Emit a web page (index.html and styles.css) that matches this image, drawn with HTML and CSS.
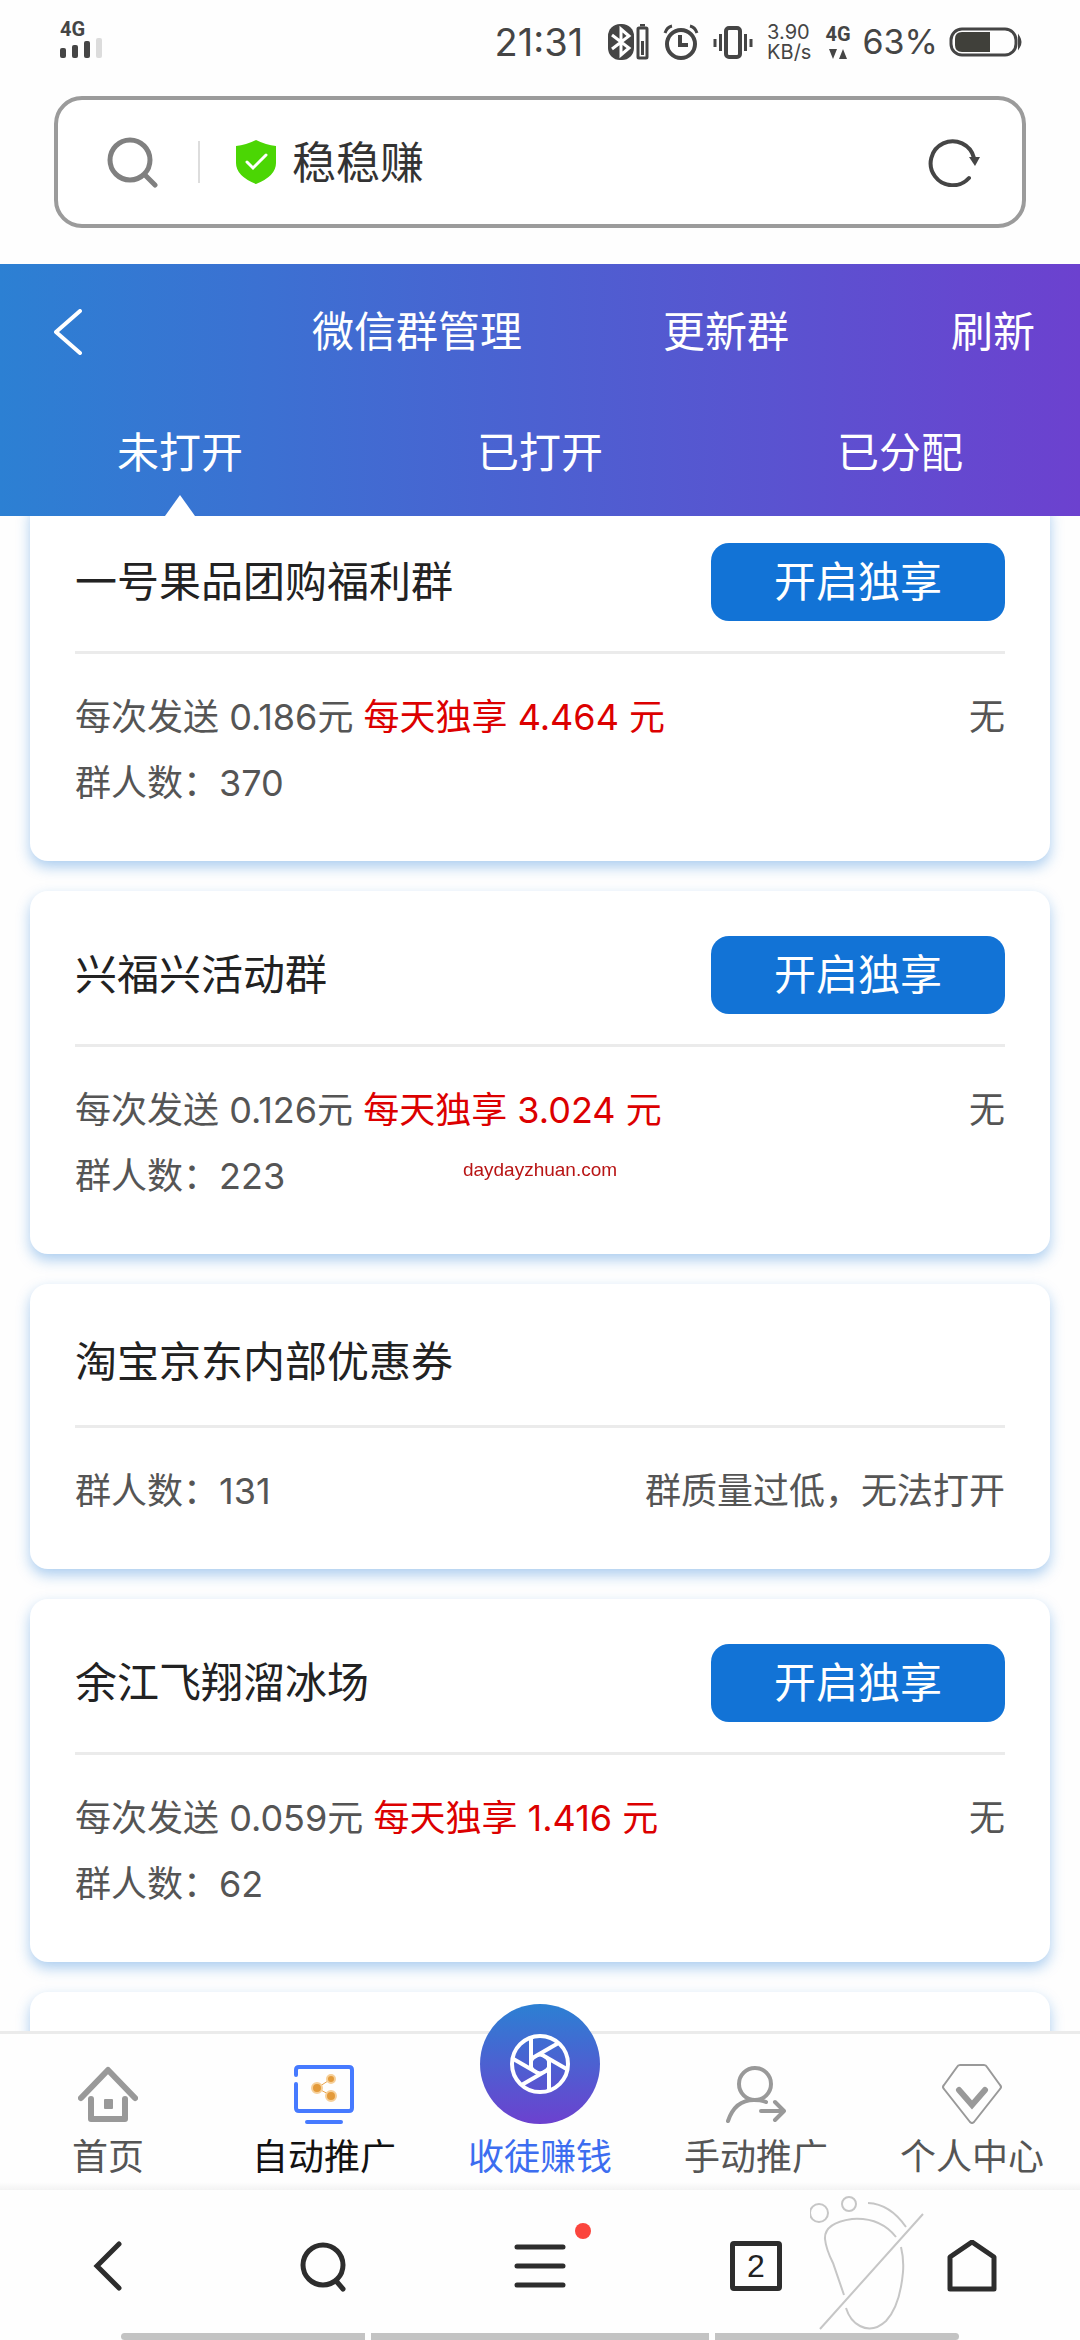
FILE: index.html
```html
<!DOCTYPE html>
<html lang="zh-CN">
<head>
<meta charset="utf-8">
<meta name="viewport" content="width=device-width, initial-scale=1">
<title>微信群管理</title>
<link rel="stylesheet" href="styles.css">
</head>
<body>
<div class="status-bar">
  <div class="signal">
    <span class="signal-label">4G</span>
    <svg width="42" height="20" viewBox="0 0 42 20"><g fill="#454545"><rect y="10" width="6" height="10" rx="2"/><rect x="12" y="7" width="6" height="13" rx="2"/><rect x="24" y="3" width="6" height="17" rx="2"/></g><rect x="36" width="6" height="20" rx="2" fill="#dcdcdc"/></svg>
  </div>
  <div class="status-right">
    <span class="clock">21:31</span>
    <svg class="bluetooth" width="42" height="36" viewBox="0 0 42 36"><rect x="1" y="0" width="26" height="36" rx="12" fill="#454545"/><path d="M5 11l17 13-8 7V5l8 7L5 25" fill="none" stroke="#fff" stroke-width="3"/><rect x="31" y="4" width="9" height="30" rx="1" fill="none" stroke="#454545" stroke-width="3"/><path d="M33 1h5M35.500 17v14" stroke="#454545" stroke-width="3"/></svg>
    <svg class="alarm" width="36" height="36" viewBox="0 0 36 36" fill="none" stroke="#454545" stroke-width="4"><circle cx="18" cy="20" r="14"/><path d="M17 11v10h8"/><path d="M2 9q2-6 7-7M34 9q-2-6-7-7" stroke-width="3"/></svg>
    <svg class="vibrate" width="40" height="36" viewBox="0 0 40 36" fill="none" stroke="#454545" stroke-width="4"><rect x="13" y="4" width="14" height="29" rx="3"/><path d="M2 15v8M7.500 10v17M38 15v8M32.500 10v17" stroke-width="3"/></svg>
    <span class="speed"><span>3.90</span><span>KB/s</span></span>
    <span class="network"><span class="signal-label">4G</span><svg width="20" height="10" viewBox="0 0 20 10" fill="#454545"><path d="M1 0h8l-4 10zM11 10h8l-4-10z"/></svg></span>
    <span class="percent">63%</span>
    <svg class="battery" width="74" height="32" viewBox="0 0 74 32"><rect x="3" y="3" width="65" height="26" rx="11" fill="none" stroke="#454545" stroke-width="3"/><path d="M42 6v20H14q-7 0-7-7v-6q0-7 7-7z" fill="#40403a"/><path d="M71 11q3 5 0 10z" fill="#454545" stroke="#454545" stroke-width="2"/></svg>
  </div>
</div>

<form class="address">
  <svg width="52" height="52" viewBox="0 0 52 52" fill="none" stroke="#808080" stroke-width="5" stroke-linecap="round"><circle cx="24" cy="24" r="20"/><path d="M39 39l10 10"/></svg>
  <span class="address-divider"></span>
  <svg class="shield" width="40" height="44" viewBox="0 0 40 44"><path d="M20 0Q30 5 40 6v17q0 13-20 21Q0 36 0 23V6q10-1 20-6z" fill="#4bd604"/><path d="M11 22l6 6 13-13" fill="none" stroke="#fff" stroke-width="3" stroke-linecap="round"/></svg>
  <input class="address-input" type="text" value="稳稳赚" aria-label="搜索或输入网址">
  <button class="plain" type="button" aria-label="重新加载"><svg width="52" height="50" viewBox="0 0 52 50"><path d="M46 21A22 22 0 1 0 41 41" fill="none" stroke="#454545" stroke-width="4" stroke-linecap="round"/><path d="M41 20h11l-5 9z" fill="#454545"/></svg></button>
</form>

<header class="header">
  <div class="header-top">
    <a class="back" href="#" aria-label="返回"><svg width="28" height="46" viewBox="0 0 28 46"><path d="M26 2L2 23l24 21" fill="none" stroke="#fff" stroke-width="4" stroke-linecap="round" stroke-linejoin="round"/></svg></a>
    <h1 class="title">微信群管理</h1>
    <button class="plain" type="button">更新群</button>
    <button class="plain refresh" type="button">刷新</button>
  </div>
  <nav class="tabs">
    <a class="tab active" href="#">未打开</a>
    <a class="tab" href="#">已打开</a>
    <a class="tab" href="#">已分配</a>
  </nav>
</header>

<main class="list">
  <article class="card">
    <div class="card-head"><h2 class="name">一号果品团购福利群</h2><button class="open" type="button">开启独享</button></div>
    <div class="card-body"><div><p>每次发送 0.186元 <span class="price">每天独享 4.464 元</span></p><p>群人数：370</p></div><p>无</p></div>
  </article>
  <article class="card">
    <div class="card-head"><h2 class="name">兴福兴活动群</h2><button class="open" type="button">开启独享</button></div>
    <div class="card-body"><div><p>每次发送 0.126元 <span class="price">每天独享 3.024 元</span></p><p>群人数：223</p></div><p>无</p></div>
  </article>
  <article class="card">
    <div class="card-head"><h2 class="name">淘宝京东内部优惠券</h2></div>
    <div class="card-body"><p>群人数：131</p><p>群质量过低，无法打开</p></div>
  </article>
  <article class="card">
    <div class="card-head"><h2 class="name">余江飞翔溜冰场</h2><button class="open" type="button">开启独享</button></div>
    <div class="card-body"><div><p>每次发送 0.059元 <span class="price">每天独享 1.416 元</span></p><p>群人数：62</p></div><p>无</p></div>
  </article>
  <article class="card card-next"></article>
</main>

<nav class="menu">
  <a class="menu-item" href="#">
    <svg width="60" height="60" viewBox="0 0 60 60" fill="none" stroke="#999" stroke-width="6" stroke-linecap="round"><path d="M3 34L30 6l27 28" stroke-linejoin="round"/><path d="M13 35v20h34V35" stroke-linejoin="round"/><rect x="26" y="35" width="9" height="10" rx="1" fill="#999" stroke="none"/></svg>
    <span>首页</span>
  </a>
  <a class="menu-item current" href="#">
    <svg width="60" height="60" viewBox="0 0 60 60" fill="none"><path d="M2 11V6q0-3 3-3h50q3 0 3 3v38q0 3-3 3H5q-3 0-3-3V20M13 58h34" stroke="#467aff" stroke-width="4" stroke-linecap="round"/><path d="M37 15L23 24l15 8" stroke="#e9a44c" stroke-width="1"/><g fill="#e39a3a" stroke="#f6cf98" stroke-width="2"><circle cx="37" cy="15" r="4"/><circle cx="23" cy="24" r="5"/><circle cx="37" cy="32" r="5"/></g></svg>
    <span>自动推广</span>
  </a>
  <a class="menu-item featured" href="#">
    <span class="wheel"><svg width="60" height="60" viewBox="-30 -30 60 60" fill="none" stroke="#fff" stroke-width="4"><circle r="28"/><circle r="9" stroke-width="3"/><path id="blade" d="M-9-26V5"/><use href="#blade" transform="rotate(60)"/><use href="#blade" transform="rotate(120)"/><use href="#blade" transform="rotate(180)"/><use href="#blade" transform="rotate(240)"/><use href="#blade" transform="rotate(300)"/></svg></span>
    <span>收徒赚钱</span>
  </a>
  <a class="menu-item" href="#">
    <svg width="60" height="60" viewBox="0 0 60 60" fill="none" stroke="#999" stroke-width="4" stroke-linecap="round"><circle cx="29" cy="20" r="16"/><path d="M2 57Q9 36 28 36q8 0 12 2"/><path d="M35 47h23M49 38l9 9-9 9" stroke-linejoin="round"/></svg>
    <span>手动推广</span>
  </a>
  <a class="menu-item" href="#">
    <svg width="60" height="60" viewBox="0 0 60 60" fill="none" stroke="#999" stroke-linecap="round" stroke-linejoin="round"><path d="M18 1h24q2 0 3 2l13 18q2 2 0 4L32 58q-2 2-4 0L2 25q-2-2 0-4L15 3q1-2 3-2z" stroke-width="2"/><path d="M17 26l13 15 13-15" stroke-width="6" stroke-linejoin="miter"/></svg>
    <span>个人中心</span>
  </a>
</nav>

<footer class="browser-bar">
  <div class="browser-buttons">
    <button class="plain" type="button" aria-label="后退"><svg width="52" height="52" viewBox="0 0 52 52"><path d="M37 4L15 26l22 22"/></svg></button>
    <button class="plain" type="button" aria-label="搜索"><svg width="52" height="52" viewBox="0 0 52 52"><circle cx="25" cy="25" r="20"/><path d="M39 42l6 7"/></svg></button>
    <button class="plain more" type="button" aria-label="菜单"><svg width="52" height="52" viewBox="0 0 52 52"><path d="M3 7h46M3 26h46M3 45h46"/></svg></button>
    <button class="plain pages" type="button" aria-label="2 个窗口"><span class="page-count">2</span></button>
    <button class="plain" type="button" aria-label="主页"><svg width="52" height="52" viewBox="0 0 52 52"><path d="M4 17L26 2l22 15v32H4z" stroke-linejoin="round"/></svg></button>
  </div>
  <svg class="footprint" width="120" height="140" viewBox="0 0 120 140" fill="none" stroke="#c6c6c6" stroke-width="2"><circle cx="9" cy="17" r="9"/><circle cx="39" cy="8" r="7"/><path d="M58 7q22 1 38 24M113 18L10 133M86 41Q70 21 42 23 14 27 15 43q1 10 8 24l11 32M91 51q3 12 2 25-3 34-17 49-13 12-26 5-10-5-14-18"/></svg>
  <div class="gesture-bars"><span></span><span></span><span></span></div>
</footer>
<div class="watermark">daydayzhuan.com</div>
</body>
</html>
```

FILE: styles.css
```css
* { box-sizing: border-box; }

body {
  display: flex;
  flex-direction: column;
  height: 100vh;
  margin: 0;
  overflow: hidden;
  background: #fefefe;
  color: #555;
  font-family: Inter, "Noto Sans CJK SC", sans-serif;
  font-size: 36px;
}

h1, h2, p { margin: 0; font-weight: 400; }
a { color: inherit; text-decoration: none; }
svg { display: block; flex: none; }

.plain {
  padding: 0;
  border: 0;
  background: none;
  color: inherit;
  font: inherit;
}

/* Phone status bar */
.status-bar {
  display: flex;
  justify-content: space-between;
  flex: none;
  height: 96px;
  padding: 20px 58px 0 60px;
  color: #454545;
}
.signal, .network, .speed { display: flex; flex-direction: column; }
.signal-label { font: 700 20px/18px Roboto, sans-serif; }
.status-right { display: flex; align-items: center; height: 44px; }
.clock { font-size: 38px; line-height: 44px; }
.bluetooth { margin-left: 24px; }
.alarm { margin-left: 14px; }
.vibrate { margin-left: 14px; }
.speed { margin-left: 14px; font-size: 20px; line-height: 20px; }
.network { align-items: center; gap: 6px; margin-left: 14px; }
.percent { margin-left: 12px; font-size: 34px; line-height: 44px; }
.battery { margin-left: 10px; }

/* Address bar */
.address {
  display: flex;
  align-items: center;
  flex: none;
  height: 132px;
  margin: 0 54px 36px;
  padding: 0 42px 0 48px;
  border: 4px solid #9b9b9b;
  border-radius: 28px;
  background: #fff;
}
.address-divider { width: 2px; height: 42px; margin: 0 36px 0 40px; background: #ddd; }
.address-input {
  flex: 1;
  min-width: 0;
  height: 60px;
  margin-left: 16px;
  padding: 0 0 4px;
  border: 0;
  outline: 0;
  background: none;
  color: #333;
  font: inherit;
  font-size: 44px;
}

/* Page header */
.header {
  position: relative;
  z-index: 1;
  flex: none;
  background: linear-gradient(90deg, #2c80d3, #6c41cf);
  color: #fff;
  font-size: 42px;
  line-height: 66px;
}
.header-top {
  display: grid;
  grid-template-columns: 23fr 28fr 35fr 14fr;
  align-items: center;
  height: 135px;
  padding: 0 45px 0 54px;
}
.title { font-size: 42px; text-align: center; }
.refresh { text-align: right; }
.tabs { display: grid; grid-template-columns: repeat(3, 1fr); height: 117px; }
.tab { position: relative; line-height: 108px; text-align: center; }
.tab.active::after {
  content: "";
  position: absolute;
  bottom: 0;
  left: 50%;
  border: solid transparent;
  border-width: 0 15px 21px;
  border-bottom-color: #fff;
  transform: translateX(-50%);
}

/* Group cards */
.list {
  display: flex;
  flex-direction: column;
  gap: 30px;
  flex: 1;
  min-height: 0;
  margin-top: -18px;
  padding: 0 30px;
  overflow: hidden;
}
.card {
  flex: none;
  padding: 0 45px;
  border-radius: 18px;
  background: #fff;
  box-shadow: 0 6px 14px rgba(17, 114, 213, 0.35);
}
.card-next { height: 200px; }
.card-head {
  display: flex;
  align-items: center;
  justify-content: space-between;
  padding: 45px 0 30px;
  border-bottom: 3px solid #ebebeb;
}
.name { color: #222; font-size: 42px; line-height: 66px; }
.open {
  width: 294px;
  height: 78px;
  padding: 0;
  border: 0;
  border-radius: 18px;
  background: #1273d6;
  color: #fff;
  font: inherit;
  font-size: 42px;
  line-height: 78px;
}
.card-body {
  display: flex;
  justify-content: space-between;
  padding: 30px 0 45px;
  line-height: 66px;
}
.price { color: #dc0000; }

/* App menu */
.menu {
  position: relative;
  z-index: 1;
  display: grid;
  grid-template-columns: repeat(5, 1fr);
  flex: none;
  height: 159px;
  border-top: 3px solid #ebebeb;
  background: linear-gradient(#fefefe 148px, #f3f3f3);
}
.menu-item {
  display: flex;
  flex-direction: column;
  align-items: center;
  gap: 6px;
  padding-top: 30px;
  line-height: 54px;
}
.menu-item.current { color: #111; }
.menu-item.featured { color: #3c6df0; }
.wheel {
  display: grid;
  place-items: center;
  width: 120px;
  height: 120px;
  margin-top: -60px;
  border-radius: 50%;
  background: linear-gradient(#2c80d3, #6c41cf);
}

/* Browser toolbar */
.browser-bar {
  position: relative;
  flex: none;
  height: 150px;
  background: #fefefe;
}
.browser-buttons {
  display: grid;
  grid-template-columns: repeat(5, 1fr);
  height: 143px;
  padding-top: 9px;
}
.browser-buttons .plain { display: grid; place-items: center; position: relative; }
.browser-buttons svg { fill: none; stroke: #2d2d2d; stroke-width: 5; stroke-linecap: round; }
.more::after {
  content: "";
  position: absolute;
  top: 24px;
  left: calc(50% + 35px);
  width: 16px;
  height: 16px;
  border-radius: 50%;
  background: #fb453d;
}
.page-count {
  width: 52px;
  height: 50px;
  border: 5px solid #2d2d2d;
  border-radius: 4px;
  color: #222;
  font: 32px/40px "Liberation Sans", sans-serif;
}
.footprint { position: absolute; top: 6px; left: 75%; }
.gesture-bars { display: flex; gap: 6px; height: 7px; margin: 0 121px; }
.gesture-bars span { flex: 244; background: #c3c3c3; }
.gesture-bars span:nth-child(2) { flex: 338; }
.gesture-bars span:first-child { border-radius: 4px 0 0 4px; }
.gesture-bars span:last-child { border-radius: 0 4px 4px 0; }

.watermark {
  position: fixed;
  top: 50%;
  left: 50%;
  z-index: 2;
  color: #b81414;
  font: 19px/26px "Liberation Sans", sans-serif;
  transform: translate(-50%, -50%);
}
```
